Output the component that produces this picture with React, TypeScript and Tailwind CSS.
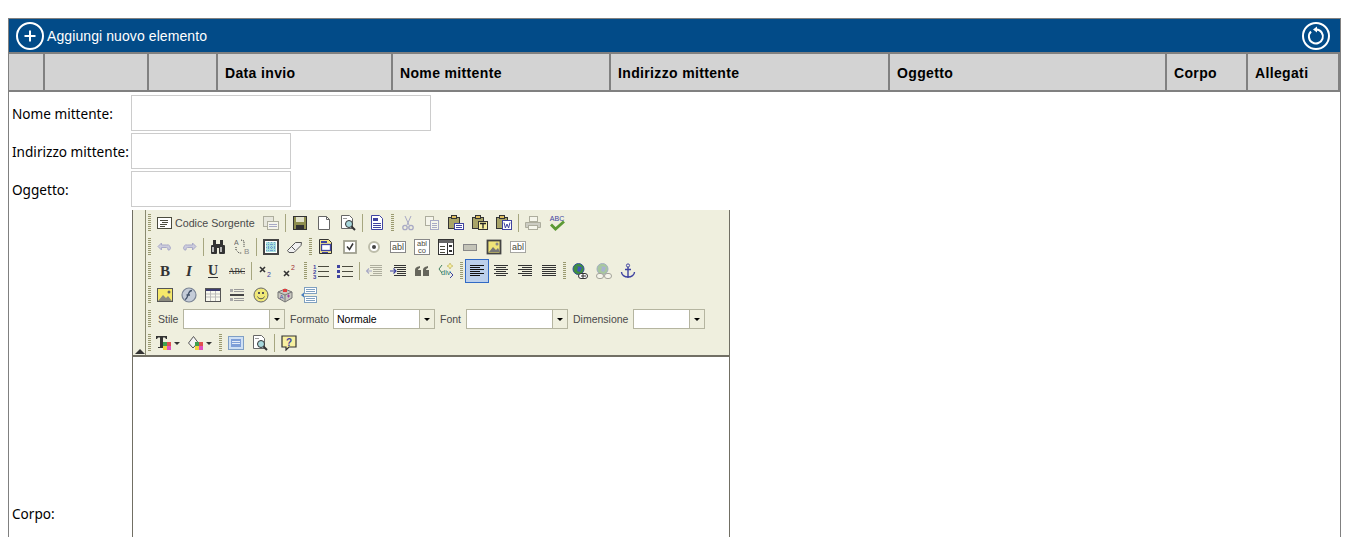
import type { ReactNode } from "react";

const D = "#4b4b3e";
const N = "#3f43a0";

function Svg({ children, dim = false }: { children: ReactNode; dim?: boolean }) {
  return (
    <svg width="16" height="16" viewBox="0 0 16 16" className={dim ? "opacity-40" : ""}>
      {children}
    </svg>
  );
}

function Lines({ x, y, w, n, gap = 2, c = D }: { x: number; y: number; w: number; n: number; gap?: number; c?: string }) {
  return (
    <>
      {Array.from({ length: n }).map((_, i) => (
        <rect key={i} x={x} y={y + i * gap} width={w} height="1" fill={c} />
      ))}
    </>
  );
}

function Abl({ t = "abl", y = 11, s = 8 }: { t?: string; y?: number; s?: number }) {
  return (
    <text x="8" y={y} textAnchor="middle" fontSize={s} fontFamily="Liberation Sans, sans-serif" fill={D}>
      {t}
    </text>
  );
}

function Swatches({ x, y }: { x: number; y: number }) {
  return (
    <>
      <rect x={x} y={y} width="4" height="4" fill="#3f9f4f" />
      <rect x={x + 4} y={y} width="4" height="4" fill="#e04f4f" />
      <rect x={x} y={y + 4} width="4" height="4" fill="#f0d040" />
      <rect x={x + 4} y={y + 4} width="4" height="4" fill="#e050c0" />
    </>
  );
}

const icons: Record<string, ReactNode> = {
  source: (
    <Svg>
      <rect x="0.5" y="2.5" width="14" height="11" fill="#fff" stroke={D} />
      <Lines x={3} y={5} w={8} n={1} />
      <Lines x={5} y={7} w={6} n={1} />
      <Lines x={3} y={9} w={7} n={1} />
      <Lines x={3} y={11} w={5} n={1} />
    </Svg>
  ),
  docprops: (
    <Svg dim>
      <rect x="0.5" y="1.5" width="10" height="10" fill="#ddd" stroke={D} />
      <rect x="4.5" y="6.5" width="11" height="8" fill="#fff" stroke={D} />
      <Lines x={6} y={9} w={8} n={2} c={N} />
    </Svg>
  ),
  save: (
    <Svg>
      <rect x="1.5" y="1.5" width="13" height="13" fill="#8f8f4f" stroke="#333" />
      <rect x="4" y="2" width="8" height="5" fill="#e4e4cc" />
      <rect x="4" y="10" width="8" height="4" fill="#333" />
    </Svg>
  ),
  newdoc: (
    <Svg>
      <path d="M2.5 1.5h8l3 3v10h-11z" fill="#fff" stroke="#666" />
      <path d="M10.5 1.5v3h3" fill="none" stroke="#666" />
    </Svg>
  ),
  preview: (
    <Svg>
      <path d="M1.5 0.5h8l3 3v10h-11z" fill="#fff" stroke="#666" />
      <Lines x={3} y={3} w={4} n={1} c="#999" />
      <circle cx="9" cy="9" r="3.5" fill="#a8d8dc" stroke="#333" />
      <path d="M11.5 11.5l3.5 3.5" stroke="#333" strokeWidth="2" />
    </Svg>
  ),
  templates: (
    <Svg>
      <path d="M2.5 0.5h8l3 3v11h-11z" fill="#fff" stroke={N} />
      <rect x="4" y="3" width="5" height="3" fill={N} />
      <Lines x={4} y={8} w={8} n={3} c={N} />
    </Svg>
  ),
  cut: (
    <Svg dim>
      <path d="M5 1l4 9M11 1l-4 9" stroke={N} fill="none" />
      <circle cx="5" cy="12.5" r="2.2" fill="none" stroke={N} strokeWidth="1.3" />
      <circle cx="11" cy="12.5" r="2.2" fill="none" stroke={N} strokeWidth="1.3" />
    </Svg>
  ),
  copy: (
    <Svg dim>
      <rect x="1.5" y="1.5" width="8" height="9" fill="#fff" stroke={D} />
      <rect x="6.5" y="5.5" width="8" height="9" fill="#fff" stroke={N} />
      <Lines x={8} y={8} w={5} n={3} c={N} />
    </Svg>
  ),
  paste: (
    <Svg>
      <rect x="0.5" y="2.5" width="11" height="11" fill="#a8a468" stroke="#333" />
      <rect x="3.5" y="0.5" width="5" height="3" fill="#e0c060" stroke="#333" />
      <rect x="6.5" y="8.5" width="9" height="6" fill="#fff" stroke={N} />
      <Lines x={8} y={10} w={6} n={2} c={N} />
    </Svg>
  ),
  pastetext: (
    <Svg>
      <rect x="0.5" y="2.5" width="11" height="11" fill="#a8a468" stroke="#333" />
      <rect x="3.5" y="0.5" width="5" height="3" fill="#e0c060" stroke="#333" />
      <rect x="6.5" y="6.5" width="9" height="8" fill="#f8f0a0" stroke="#333" />
      <path d="M8 8.5h6M11 8.5v5" stroke="#222" strokeWidth="1.3" />
    </Svg>
  ),
  pasteword: (
    <Svg>
      <rect x="0.5" y="2.5" width="11" height="11" fill="#a8a468" stroke="#333" />
      <rect x="3.5" y="0.5" width="5" height="3" fill="#e0c060" stroke="#333" />
      <rect x="6.5" y="5.5" width="9" height="9" fill="#fff" stroke={N} />
      <path d="M8 7.5l1.4 5.5 1.6-4 1.6 4L14 7.5" stroke={N} fill="none" />
    </Svg>
  ),
  print: (
    <Svg dim>
      <rect x="4.5" y="1.5" width="8" height="5" fill="#fff" stroke={D} />
      <path d="M0.5 7.5h15v5h-15z" fill="#999" stroke={D} />
      <rect x="3.5" y="10.5" width="9" height="4" fill="#fff" stroke={D} />
    </Svg>
  ),
  spell: (
    <Svg>
      <text x="8" y="6" textAnchor="middle" fontSize="7" fontFamily="Liberation Sans, sans-serif" fill={N}>
        ABC
      </text>
      <path d="M2 9.5l4.5 4.5L15 6.5" stroke="#5c9a34" strokeWidth="2.8" fill="none" />
    </Svg>
  ),
  undo: (
    <Svg>
      <path d="M4.5 4v2h5a3 3 0 0 1 3 5h-1.5a2 2 0 0 0-1.5-2.5h-5V11L1 7.5z" fill="#ccccdd" stroke="#a9a9c8" />
    </Svg>
  ),
  redo: (
    <Svg>
      <path d="M11.5 4v2h-5a3 3 0 0 0-3 5H5a2 2 0 0 1 1.5-2.5h5V11L15 7.5z" fill="#ccccdd" stroke="#a9a9c8" />
    </Svg>
  ),
  find: (
    <Svg>
      <rect x="3" y="1" width="3" height="5" fill="#333" />
      <rect x="10" y="1" width="3" height="5" fill="#333" />
      <rect x="6" y="5" width="4" height="4" fill="#333" />
      <rect x="1" y="6" width="6" height="9" rx="1" fill="#333" />
      <rect x="9" y="6" width="6" height="9" rx="1" fill="#333" />
      <rect x="2" y="8" width="2" height="5" fill="#b8b8b8" />
      <rect x="10" y="8" width="2" height="5" fill="#b8b8b8" />
    </Svg>
  ),
  replace: (
    <Svg>
      <text x="0" y="6" fontSize="7" fontFamily="Liberation Sans, sans-serif" fill="#666">
        A
      </text>
      <text x="10" y="15" fontSize="8" fontFamily="Liberation Sans, sans-serif" fill="#888">
        B
      </text>
      <path d="M2 8v3l3 3h3M7 1l3 1v6" fill="none" stroke="#333" strokeDasharray="1 1" />
    </Svg>
  ),
  selectall: (
    <Svg>
      <rect x="1" y="1" width="14" height="14" fill="#fff" stroke="#444" strokeWidth="2" />
      <rect x="3" y="3" width="10" height="10" fill="#a8e0dc" />
      <path d="M3 5.5h10M3 8.5h10M3 11.5h10M5.5 3v10M8.5 3v10M11.5 3v10" stroke="#6f9fd0" strokeDasharray="1 1" />
    </Svg>
  ),
  eraser: (
    <Svg>
      <path d="M0.5 11.5l8-8h6l-.5 3-7 7H2z" fill="#f0f0f0" stroke="#555" />
      <path d="M4.5 7.5l3.5 3.5" stroke="#555" />
    </Svg>
  ),
  form: (
    <Svg>
      <path d="M1.5 0.5h9l3 3v11h-12z" fill="#f4e68c" stroke="#333" />
      <rect x="3.5" y="5.5" width="9" height="6" fill="#fff" stroke={N} strokeWidth="1.3" />
      <rect x="3" y="2" width="6" height="2" fill={N} />
      <rect x="4" y="13" width="6" height="1" fill={N} />
    </Svg>
  ),
  checkbox: (
    <Svg>
      <rect x="2" y="2" width="12" height="12" fill="#fff" stroke="#a0a090" strokeWidth="1.8" />
      <path d="M5 7.5l2.5 3 3.5-6" fill="none" stroke="#333" strokeWidth="1.5" />
    </Svg>
  ),
  radio: (
    <Svg>
      <circle cx="8" cy="8" r="5" fill="#fff" stroke="#bdbdaa" strokeWidth="2" />
      <circle cx="8" cy="8" r="2" fill="#444" />
    </Svg>
  ),
  textfield: (
    <Svg>
      <rect x="0.5" y="2.5" width="15" height="11" fill="#fff" stroke="#888" />
      <Abl t="abl" y={11} s={9} />
    </Svg>
  ),
  textarea: (
    <Svg>
      <rect x="0.5" y="0.5" width="15" height="15" fill="#fff" stroke="#888" />
      <Abl y={7} s={7.5} />
      <Abl t="co" y={14} s={7.5} />
    </Svg>
  ),
  select: (
    <Svg>
      <rect x="0.5" y="0.5" width="15" height="15" fill="#fff" stroke="#333" />
      <rect x="1" y="1" width="14" height="3" fill="#666" />
      <rect x="9" y="4" width="1" height="11" fill="#333" />
      <Lines x={2} y={7} w={5} n={3} gap={3} />
      <rect x="11" y="6" width="3" height="2" fill="#333" />
      <rect x="11" y="11" width="3" height="2" fill="#333" />
    </Svg>
  ),
  button: (
    <Svg>
      <rect x="1.5" y="5.5" width="13" height="6" fill="#c4c4b8" stroke="#888" />
    </Svg>
  ),
  imagebutton: (
    <Svg>
      <rect x="1.5" y="1.5" width="13" height="13" fill="#f0e478" stroke="#444" strokeWidth="1.8" />
      <path d="M3 13l4-5 3 3 2-2 2 4z" fill="#777" />
      <circle cx="11" cy="5" r="1.5" fill="#888" />
    </Svg>
  ),
  hidden: (
    <Svg>
      <rect x="0.5" y="2.5" width="15" height="11" fill="#fff" stroke="#555" strokeDasharray="1 1" />
      <Abl t="abl" y={11} s={9} />
    </Svg>
  ),
  bold: (
    <Svg>
      <text x="8" y="13" textAnchor="middle" fontSize="15" fontWeight="700" fontFamily="Liberation Serif, serif" fill="#333">
        B
      </text>
    </Svg>
  ),
  italic: (
    <Svg>
      <text x="8" y="13" textAnchor="middle" fontSize="15" fontWeight="700" fontStyle="italic" fontFamily="Liberation Serif, serif" fill="#333">
        I
      </text>
    </Svg>
  ),
  underline: (
    <Svg>
      <text x="8" y="12" textAnchor="middle" fontSize="14" fontWeight="700" fontFamily="Liberation Serif, serif" fill="#333">
        U
      </text>
      <rect x="3" y="14" width="10" height="1" fill="#333" />
    </Svg>
  ),
  strike: (
    <Svg>
      <text x="8" y="11" textAnchor="middle" fontSize="8" fontFamily="Liberation Serif, serif" fill="#333">
        ABC
      </text>
      <rect x="0" y="8" width="16" height="1" fill="#333" />
    </Svg>
  ),
  sub: (
    <Svg>
      <path d="M2 4l5 5M7 4l-5 5" stroke="#333" strokeWidth="1.6" />
      <text x="9" y="14" fontSize="7" fontFamily="Liberation Sans, sans-serif" fill={N}>
        2
      </text>
    </Svg>
  ),
  sup: (
    <Svg>
      <path d="M2 8l5 5M7 8l-5 5" stroke="#333" strokeWidth="1.6" />
      <text x="9" y="7" fontSize="7" fontFamily="Liberation Sans, sans-serif" fill="#a03030">
        2
      </text>
    </Svg>
  ),
  ol: (
    <Svg>
      <text x="0" y="6" fontSize="6" fontWeight="700" fontFamily="Liberation Sans, sans-serif" fill={N}>1</text>
      <text x="0" y="11" fontSize="6" fontWeight="700" fontFamily="Liberation Sans, sans-serif" fill={N}>2</text>
      <text x="0" y="16" fontSize="6" fontWeight="700" fontFamily="Liberation Sans, sans-serif" fill={N}>3</text>
      <Lines x={5} y={3} w={11} n={3} gap={5} />
    </Svg>
  ),
  ul: (
    <Svg>
      <rect x="0" y="2" width="3" height="3" fill={N} />
      <rect x="0" y="7" width="3" height="3" fill={N} />
      <rect x="0" y="12" width="3" height="3" fill={N} />
      <Lines x={5} y={3} w={11} n={3} gap={5} />
    </Svg>
  ),
  outdent: (
    <Svg dim>
      <Lines x={4} y={2} w={12} n={2} gap={2} />
      <Lines x={7} y={6} w={9} n={3} gap={2} />
      <Lines x={4} y={12} w={12} n={1} gap={2} />
      <path d="M0 8h6M3 5.5L0.5 8 3 10.5" stroke={N} strokeWidth="1.2" fill="none" />
    </Svg>
  ),
  indent: (
    <Svg>
      <Lines x={4} y={2} w={12} n={2} gap={2} c="#333" />
      <Lines x={7} y={6} w={9} n={3} gap={2} c="#333" />
      <Lines x={4} y={12} w={12} n={1} gap={2} c="#333" />
      <path d="M0 8h6M3.5 5.5L6 8 3.5 10.5" stroke={N} strokeWidth="1.2" fill="none" />
    </Svg>
  ),
  quote: (
    <Svg>
      <path d="M1 8c0-3 1-4 5-5v2c-1 0-2 1-2 2h3v6H1zM9 8c0-3 1-4 5-5v2c-1 0-2 1-2 2h3v6H9z" fill="#66665c" />
    </Svg>
  ),
  div: (
    <Svg>
      <path d="M4 2L1 6l3 4" fill="none" stroke="#3f7f5f" />
      <path d="M12 9l3 3-3 3" fill="none" stroke={N} />
      <text x="3" y="12" fontSize="7.5" fontFamily="Liberation Sans, sans-serif" fill="#2f7f6f">
        div
      </text>
      <path d="M12 0l1 2 2 1-2 1-1 2-1-2-2-1 2-1z" fill="#f8f0a0" stroke="#b0a040" strokeWidth="0.5" />
    </Svg>
  ),
  left: (
    <Svg>
      {[2, 6, 10].map((y) => (
        <rect key={y} x="1" y={y} width="14" height="1" fill="#111" />
      ))}
      {[4, 8, 12].map((y) => (
        <rect key={y} x="1" y={y} width="10" height="1" fill="#111" />
      ))}
    </Svg>
  ),
  center: (
    <Svg>
      {[2, 6, 10].map((y) => (
        <rect key={y} x="1" y={y} width="14" height="1" fill="#333" />
      ))}
      {[4, 8, 12].map((y) => (
        <rect key={y} x="3" y={y} width="10" height="1" fill="#333" />
      ))}
    </Svg>
  ),
  right: (
    <Svg>
      {[2, 6, 10].map((y) => (
        <rect key={y} x="1" y={y} width="14" height="1" fill="#333" />
      ))}
      {[4, 8, 12].map((y) => (
        <rect key={y} x="5" y={y} width="10" height="1" fill="#333" />
      ))}
    </Svg>
  ),
  justify: (
    <Svg>
      <Lines x={1} y={2} w={14} n={6} c="#333" />
    </Svg>
  ),
  link: (
    <Svg>
      <circle cx="6.5" cy="6" r="5.5" fill="#3f8f3f" stroke="#34509a" />
      <path d="M3 3l3 1-1 4 3 1 2-5" fill="#3f57c0" />
      <rect x="6.5" y="10.5" width="9" height="5" rx="2.5" fill="#fff" stroke="#333" />
      <path d="M9 13h5M11 11v4" stroke="#333" />
    </Svg>
  ),
  unlink: (
    <Svg dim>
      <circle cx="6.5" cy="6" r="5.5" fill="#3f8f3f" stroke="#34509a" />
      <path d="M3 3l3 1-1 4 3 1 2-5" fill="#3f57c0" />
      <rect x="0.5" y="10.5" width="7" height="5" rx="2.5" fill="#fff" stroke="#333" />
      <rect x="8.5" y="10.5" width="7" height="5" rx="2.5" fill="#fff" stroke="#333" />
    </Svg>
  ),
  anchor: (
    <Svg>
      <circle cx="8" cy="2.5" r="1.6" fill="none" stroke={N} />
      <path d="M8 4v11M5 6.5h6M1.5 9c0 3 3 5 6.5 5s6.5-2 6.5-5" fill="none" stroke={N} strokeWidth="1.4" />
    </Svg>
  ),
  image: (
    <Svg>
      <rect x="0.5" y="1.5" width="15" height="13" fill="#f5e86a" stroke="#555" />
      <path d="M1 14l5-6 3 3 2-2 4 5z" fill="#8a8a80" />
      <circle cx="12" cy="5" r="1.5" fill="#666" />
    </Svg>
  ),
  flash: (
    <Svg>
      <circle cx="8" cy="8" r="7" fill="#c4ccd8" stroke="#7a8494" strokeWidth="1.2" />
      <path d="M11 3.5c-3 0-3 2.5-4 4.5s-1 4-3 4.5M5.5 8H9" fill="none" stroke="#44546a" strokeWidth="1.3" />
    </Svg>
  ),
  table: (
    <Svg>
      <rect x="0.5" y="1.5" width="15" height="13" fill="#f8f8ee" stroke="#555" />
      <rect x="1" y="2" width="14" height="2" fill="#3d3d70" />
      <path d="M1 7h14M1 10h14M5.5 4v10M10.5 4v10" stroke="#bbb" />
    </Svg>
  ),
  rule: (
    <Svg>
      <Lines x={5} y={2} w={10} n={2} gap={2} c="#999" />
      <rect x="1" y="7" width="14" height="2" fill="#444" />
      <Lines x={5} y={11} w={10} n={2} gap={2} c="#999" />
      <rect x="1" y="2" width="3" height="3" fill="#aaa" />
      <rect x="1" y="11" width="3" height="3" fill="#aaa" />
    </Svg>
  ),
  smiley: (
    <Svg>
      <circle cx="8" cy="8" r="7" fill="#f0e878" stroke="#666" />
      <rect x="5" y="5" width="2" height="2" fill="#555" />
      <rect x="9" y="5" width="2" height="2" fill="#555" />
      <path d="M4.5 9.5c1 3 6 3 7 0" fill="none" stroke="#555" />
    </Svg>
  ),
  special: (
    <Svg>
      <path d="M1 5l7-3 7 3v6l-7 4-7-4z" fill="#c8c8c0" stroke="#777" />
      <path d="M1 5l7 3 7-3M8 8v7" stroke="#777" fill="none" />
      <rect x="6" y="2" width="4" height="3" fill="#e04040" />
      <text x="2.5" y="12" fontSize="6" fontFamily="Liberation Sans, sans-serif" fill={N}>
        A
      </text>
      <path d="M10 9h3M11.5 7.5v3" stroke="#a040a0" />
    </Svg>
  ),
  pagebreak: (
    <Svg>
      <path d="M0 8l3-2.5v5z" fill="#4a7fc0" />
      <rect x="3.5" y="0.5" width="12" height="6" fill="#fff" stroke="#7fa0c0" />
      <rect x="3.5" y="9.5" width="12" height="6" fill="#fff" stroke="#7fa0c0" />
      <Lines x={5} y={2} w={9} n={2} c="#7fa0c0" />
      <Lines x={5} y={11} w={9} n={2} c="#7fa0c0" />
    </Svg>
  ),
  textcolor: (
    <Svg>
      <path d="M0 1h11v3h-1L9 2.5H7V12h2v1H2v-1h2V2.5H2L1 4H0z" fill="#333" />
      <Swatches x={7} y={7} />
    </Svg>
  ),
  bgcolor: (
    <Svg>
      <path d="M0.5 8l5-6.5 4.5 6-5 5.5z" fill="#f4f4f4" stroke="#555" />
      <Swatches x={7} y={7} />
    </Svg>
  ),
  maximize: (
    <Svg>
      <rect x="0.5" y="1.5" width="15" height="13" fill="#cfe0f4" stroke="#7f9fc5" />
      <rect x="3" y="4" width="10" height="8" fill="#7f9fd8" />
      <Lines x={4} y={6} w={8} n={2} c="#e4ecf8" />
    </Svg>
  ),
  about: (
    <Svg>
      <path d="M1 1h14v11H8l-3 3v-3H1z" fill="#f8f0a0" stroke="#333" strokeWidth="1.2" />
      <text x="8" y="10.5" textAnchor="middle" fontSize="10" fontWeight="700" fontFamily="Liberation Sans, sans-serif" fill={N}>
        ?
      </text>
    </Svg>
  ),
};

function Btn({ n, active = false }: { n: string; active?: boolean }) {
  return (
    <div
      className={
        active
          ? "flex h-6 w-6 shrink-0 items-center justify-center border border-[#316ac5] bg-[#bcd0ec]"
          : "flex h-6 w-6 shrink-0 items-center justify-center"
      }
    >
      {icons[n]}
    </div>
  );
}

function Sep() {
  return (
    <div className="flex h-6 w-[5px] shrink-0 items-center justify-center">
      <div className="h-[18px] w-px bg-[#a6a67f]" />
    </div>
  );
}

function Grip() {
  return (
    <div className="flex h-6 w-[7px] shrink-0 items-center pl-[2px]">
      <div className="h-[18px] w-[3px] bg-[repeating-linear-gradient(to_bottom,#9a9a70_0,#9a9a70_1px,#efefde_1px,#efefde_2px)]" />
    </div>
  );
}

function Row({ children }: { children: ReactNode }) {
  return <div className="flex h-6 items-center">{children}</div>;
}

function Combo({ w, labelW, value = "", label, ml }: { w: string; labelW: string; value?: string; label: string; ml: string }) {
  return (
    <>
      <span className={`${ml} ${labelW} shrink-0 text-[10.5px] leading-none text-[#4a4a4a]`}>{label}</span>
      <div className={`${w} flex h-5 shrink-0 items-stretch border border-[#b5b5a0] bg-white`}>
        <span className="flex-1 pl-[3px] text-[10.5px] leading-[18px] text-black">{value}</span>
        <span className="flex w-[15px] items-center justify-center border-l border-[#b5b5a0] bg-[#efefde]">
          <span className="h-0 w-0 border-x-[3px] border-t-[3px] border-x-transparent border-t-black" />
        </span>
      </div>
    </>
  );
}

function Caret() {
  return <span className="ml-[2px] h-0 w-0 border-x-[3px] border-t-[3px] border-x-transparent border-t-[#333]" />;
}

function Toolbar() {
  return (
    <div className="flex border-b-2 border-[#716f64] bg-[#efefde]">
      <div className="relative w-[13px] shrink-0 border-r border-[#8a8a70]">
        <span className="absolute bottom-[1px] left-[2px] h-0 w-0 border-x-[5px] border-b-[5px] border-x-transparent border-b-[#333]" />
      </div>
      <div className="flex-1 pt-px">
        <Row>
          <Grip />
          <div className="flex h-6 w-[106px] items-center">
            <Btn n="source" />
            <span className="-ml-[2px] text-[10.7px] text-[#4a4a4a]">Codice Sorgente</span>
          </div>
          <Btn n="docprops" />
          <Sep />
          <Btn n="save" />
          <Btn n="newdoc" />
          <Btn n="preview" />
          <Sep />
          <Btn n="templates" />
          <Grip />
          <Btn n="cut" />
          <Btn n="copy" />
          <Btn n="paste" />
          <Btn n="pastetext" />
          <Btn n="pasteword" />
          <Sep />
          <Btn n="print" />
          <Btn n="spell" />
        </Row>
        <Row>
          <Grip />
          <Btn n="undo" />
          <Btn n="redo" />
          <Sep />
          <Btn n="find" />
          <Btn n="replace" />
          <Sep />
          <Btn n="selectall" />
          <Btn n="eraser" />
          <Grip />
          <Btn n="form" />
          <Btn n="checkbox" />
          <Btn n="radio" />
          <Btn n="textfield" />
          <Btn n="textarea" />
          <Btn n="select" />
          <Btn n="button" />
          <Btn n="imagebutton" />
          <Btn n="hidden" />
        </Row>
        <Row>
          <Grip />
          <Btn n="bold" />
          <Btn n="italic" />
          <Btn n="underline" />
          <Btn n="strike" />
          <Sep />
          <Btn n="sub" />
          <Btn n="sup" />
          <Grip />
          <Btn n="ol" />
          <Btn n="ul" />
          <Sep />
          <Btn n="outdent" />
          <Btn n="indent" />
          <Btn n="quote" />
          <Btn n="div" />
          <Grip />
          <Btn n="left" active />
          <Btn n="center" />
          <Btn n="right" />
          <Btn n="justify" />
          <Grip />
          <Btn n="link" />
          <Btn n="unlink" />
          <Btn n="anchor" />
        </Row>
        <Row>
          <Grip />
          <Btn n="image" />
          <Btn n="flash" />
          <Btn n="table" />
          <Btn n="rule" />
          <Btn n="smiley" />
          <Btn n="special" />
          <Btn n="pagebreak" />
        </Row>
        <Row>
          <Grip />
          <Combo label="Stile" ml="ml-[5px]" labelW="w-[25px]" w="w-[102px]" />
          <Combo label="Formato" ml="ml-[5px]" labelW="w-[43px]" w="w-[102px]" value="Normale" />
          <Combo label="Font" ml="ml-[5px]" labelW="w-[26px]" w="w-[102px]" />
          <Combo label="Dimensione" ml="ml-[5px]" labelW="w-[60px]" w="w-[72px]" />
        </Row>
        <Row>
          <Grip />
          <div className="flex h-6 w-8 items-center pl-[3px]">
            {icons.textcolor}
            <Caret />
          </div>
          <div className="flex h-6 w-8 items-center pl-[3px]">
            {icons.bgcolor}
            <Caret />
          </div>
          <Grip />
          <Btn n="maximize" />
          <Btn n="preview" />
          <Sep />
          <Btn n="about" />
        </Row>
      </div>
    </div>
  );
}

const columns = [
  { w: "w-[36px]", t: "" },
  { w: "w-[104px]", t: "" },
  { w: "w-[69px]", t: "" },
  { w: "w-[175px]", t: "Data invio" },
  { w: "w-[218px]", t: "Nome mittente" },
  { w: "w-[279px]", t: "Indirizzo mittente" },
  { w: "w-[277px]", t: "Oggetto" },
  { w: "w-[81px]", t: "Corpo" },
  { w: "flex-1", t: "Allegati" },
];

function Field({ label, w }: { label: string; w: string }) {
  return (
    <div className="flex h-9 items-center">
      <span className="w-[119px] shrink-0 whitespace-nowrap pt-[2px] pl-[3px] text-[13.6px] leading-none text-black">{label}</span>
      <div className={`${w} ml-[3px] h-9 border border-[#cccccc] bg-white`} />
    </div>
  );
}

export default function App() {
  return (
    <div className="h-[537px] overflow-hidden bg-white pt-[18px] pl-2 pr-[7px] font-['Liberation_Sans',sans-serif]">
      <div className="h-[600px] border border-[#808080]">
        <div className="flex h-[33px] items-center justify-between bg-[#024b88] pl-[7px] pr-[10px] text-white">
          <div className="flex items-center gap-[3px]">
            <svg width="28" height="28" viewBox="0 0 28 28" fill="none" stroke="#fff">
              <circle cx="14" cy="14" r="13" strokeWidth="2" />
              <path d="M8.5 14h11M14 8.5v11" strokeWidth="2" />
            </svg>
            <span className="text-sm leading-none tracking-[0.09px]">Aggiungi nuovo elemento</span>
          </div>
          <svg width="28" height="28" viewBox="0 0 28 28" fill="none" stroke="#fff">
            <circle cx="14" cy="14" r="13" strokeWidth="2" />
            <path d="M14.5 7.5a7 7 0 1 1-5.5 2" strokeWidth="2" />
            <path d="M11 7.5l4-3v6z" fill="#fff" stroke="none" />
          </svg>
        </div>
        <div className="flex h-10 border-y-2 border-[#808080] bg-[#d3d3d3]">
          {columns.map((c, i) => (
            <div
              key={i}
              className={`${c.w} flex items-center border-r-2 border-[#808080] pt-[2px] pl-[7px] text-sm font-bold tracking-[0.35px] text-black`}
            >
              {c.t}
            </div>
          ))}
        </div>
        <div className="flex flex-col gap-[2px] pt-[3px] font-['Noto_Sans',sans-serif]">
          <Field label="Nome mittente:" w="w-[300px]" />
          <Field label="Indirizzo mittente:" w="w-[160px]" />
          <Field label="Oggetto:" w="w-[160px]" />
          <div className="mt-px flex h-[608px] items-center">
            <span className="w-[122px] shrink-0 pl-[3px] text-[13.6px] leading-none text-black">Corpo:</span>
            <div className="ml-px h-full w-[598px] border-r border-l border-[#716f64] font-['Liberation_Sans',sans-serif]">
              <Toolbar />
            </div>
          </div>
        </div>
      </div>
    </div>
  );
}
